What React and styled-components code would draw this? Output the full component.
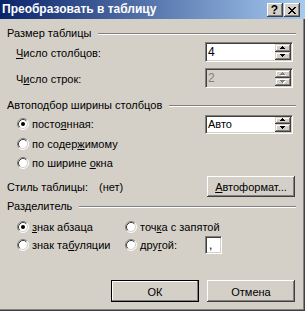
import React from 'react';
import styled, { createGlobalStyle, css } from 'styled-components';

const Global = createGlobalStyle`
  html, body { margin: 0; padding: 0; background: #d4d0c8; }
  body { font-family: "Liberation Sans", Arial, sans-serif; font-size: 11px; color: #000; }
`;

const Window = styled.div`
  width: 305px;
  height: 311px;
  display: flex;
  flex-direction: column;
  background: #d4d0c8;
  font-family: "Liberation Sans", Arial, sans-serif;
  font-size: 11px;
  color: #000;
`;

const TitleBar = styled.div`
  height: 19px;
  flex: none;
  display: flex;
  align-items: flex-start;
  padding-left: 2px;
  background: linear-gradient(to right, #0a246a, #a6caf0);
`;

const TitleText = styled.span`
  color: #fff;
  font-weight: bold;
  font-size: 12px;
  line-height: 19px;
  white-space: nowrap;
`;

const CaptionButtons = styled.div`
  margin-left: auto;
  margin-right: 5px;
  margin-top: 3px;
  display: flex;
  gap: 1px;
`;

const CaptionButton = styled.div`
  width: 16px;
  height: 14px;
  box-sizing: border-box;
  background: #d4d0c8;
  box-shadow: inset -1px -1px #404040, inset 1px 1px #fff, inset -2px -2px #808080, inset 2px 2px #d4d0c8;
  display: flex;
  align-items: center;
  justify-content: center;
  font-weight: bold;
  font-size: 12px;
  line-height: 14px;
  padding-right: 1px;
`;

const Body = styled.div`
  flex: 1;
  display: flex;
  flex-direction: column;
  padding: 0 8px 0 7px;
  border-right: 1px solid #404040;
  border-bottom: 1px solid #404040;
  box-shadow: inset -1px -1px #808080;
`;

const GroupHeader = styled.div`
  display: flex;
  align-items: center;
  height: 14px;
  margin-top: ${p => p.$mt}px;
  white-space: nowrap;
`;

const GroupLine = styled.div`
  flex: 1;
  margin-left: 7px;
  margin-top: 1px;
  border-top: 1px solid #808080;
  border-bottom: 1px solid #fff;
`;

const FieldRow = styled.div`
  display: flex;
  align-items: center;
  height: ${p => p.$h}px;
  margin-top: ${p => p.$mt}px;
  padding-left: ${p => p.$pl ?? 9}px;
  white-space: nowrap;
`;

const Label = styled.span`
  padding-top: 1px;
  min-width: ${p => p.$w || 0}px;
`;

const Key = styled.span`
  text-decoration: underline;
`;

const SpinBox = styled.div`
  width: 88px;
  height: ${p => p.$h}px;
  box-sizing: border-box;
  margin-left: auto;
  margin-right: 3px;
  display: flex;
  border: 1px solid;
  border-color: #808080 #fff #fff #808080;
  box-shadow: inset 1px 1px #404040, inset -1px -1px #d4d0c8;
  padding: 1px;
  background: ${p => (p.$disabled ? '#d4d0c8' : '#fff')};
`;

const SpinValue = styled.div`
  flex: 1;
  display: flex;
  align-items: center;
  padding-left: 1px;
  font-size: ${p => (p.$big ? 12 : 11)}px;
  color: ${p => (p.$disabled ? '#808080' : '#000')};
`;

const SpinButtons = styled.div`
  width: 16px;
  display: flex;
  flex-direction: column;
`;

const SpinButton = styled.div`
  flex: 1;
  display: flex;
  align-items: center;
  justify-content: center;
  background: #d4d0c8;
  box-shadow: inset -1px -1px #404040, inset 1px 1px #d4d0c8, inset -2px -2px #808080, inset 2px 2px #fff;
`;

const RadioRow = styled.div`
  display: grid;
  grid-template-columns: ${p => p.$cols || '1fr'};
  align-items: center;
  height: ${p => p.$h}px;
  margin-top: ${p => p.$mt || 0}px;
  padding-left: 10px;
  white-space: nowrap;
`;

const RadioItem = styled.div`
  display: flex;
  align-items: center;
  gap: 3px;
  grid-column: ${p => p.$span || 'auto'};
`;

const TextBox = styled.div`
  width: 17px;
  height: 18px;
  box-sizing: border-box;
  border: 1px solid;
  border-color: #808080 #fff #fff #808080;
  box-shadow: inset 1px 1px #404040, inset -1px -1px #d4d0c8;
  background: #fff;
  padding: 1px 0 0 3px;
  font-size: 12px;
  line-height: 14px;
`;

const PushButton = styled.div`
  width: 88px;
  height: ${p => p.$h}px;
  box-sizing: border-box;
  display: flex;
  align-items: center;
  justify-content: center;
  background: #d4d0c8;
  padding-top: 1px;
  margin-left: ${p => (p.$auto ? 'auto' : '0')};
  margin-right: ${p => p.$mr || 0}px;
  box-shadow: inset -1px -1px #404040, inset 1px 1px #fff, inset -2px -2px #808080, inset 2px 2px #d4d0c8;
  ${p => p.$default && css`
    box-shadow: inset 0 0 0 1px #000, inset -2px -2px #808080, inset 2px 2px #fff;
  `}
`;

const ButtonRow = styled.div`
  display: flex;
  justify-content: flex-end;
  gap: 8px;
  margin-top: 26px;
  margin-right: 1px;
`;

const Arrow = ({ up, disabled }) => {
  const d = up
    ? 'M2 0h1v1H2z M1 1h3v1H1z M0 2h5v1H0z'
    : 'M0 0h5v1H0z M1 1h3v1H1z M2 2h1v1H2z';
  return (
    <svg width="6" height="4" viewBox="0 0 6 4" shapeRendering="crispEdges">
      {disabled && <path d={d} fill="#fff" transform="translate(1,1)" />}
      <path d={d} fill={disabled ? '#808080' : '#000'} />
    </svg>
  );
};

const Spin = ({ value, disabled, h = 20 }) => (
  <SpinBox $h={h} $disabled={disabled}>
    <SpinValue $disabled={disabled} $big={!isNaN(+value)}>{value}</SpinValue>
    <SpinButtons>
      <SpinButton><Arrow up disabled={disabled} /></SpinButton>
      <SpinButton><Arrow disabled={disabled} /></SpinButton>
    </SpinButtons>
  </SpinBox>
);

const Radio = ({ checked }) => (
  <svg width="12" height="12" viewBox="0 0 12 12">
    <circle cx="6" cy="6" r="5" fill="#fff" />
    <path d="M2.11 9.89 A5.5 5.5 0 0 1 9.89 2.11" fill="none" stroke="#808080" strokeWidth="1" />
    <path d="M9.89 2.11 A5.5 5.5 0 0 1 2.11 9.89" fill="none" stroke="#fff" strokeWidth="1" />
    <path d="M2.82 9.18 A4.5 4.5 0 0 1 9.18 2.82" fill="none" stroke="#404040" strokeWidth="1" />
    <path d="M9.18 2.82 A4.5 4.5 0 0 1 2.82 9.18" fill="none" stroke="#d4d0c8" strokeWidth="1" />
    {checked && <circle cx="6" cy="6" r="2" fill="#000" />}
  </svg>
);

const CloseGlyph = () => (
  <svg width="8" height="7" viewBox="0 0 8 7" shapeRendering="crispEdges">
    <path
      d="M0 0h2v1H0z M6 0h2v1H6z M1 1h2v1H1z M5 1h2v1H5z M2 2h4v1H2z M3 3h2v1H3z M2 4h4v1H2z M1 5h2v1H1z M5 5h2v1H5z M0 6h2v1H0z M6 6h2v1H6z"
      fill="#000"
    />
  </svg>
);

export default function App() {
  return (
    <>
      <Global />
      <Window>
        <TitleBar>
          <TitleText>Преобразовать в таблицу</TitleText>
          <CaptionButtons>
            <CaptionButton>?</CaptionButton>
            <CaptionButton><CloseGlyph /></CaptionButton>
          </CaptionButtons>
        </TitleBar>
        <Body>
          <GroupHeader $mt={7}>
            <span>Размер таблицы</span>
            <GroupLine />
          </GroupHeader>
          <FieldRow $h={20} $mt={2}>
            <Label><Key>Ч</Key>исло столбцов:</Label>
            <Spin value="4" />
          </FieldRow>
          <FieldRow $h={20} $mt={6}>
            <Label>Ч<Key>и</Key>сло строк:</Label>
            <Spin value="2" disabled />
          </FieldRow>

          <GroupHeader $mt={10}>
            <span>Автоподбор ширины столбцов</span>
            <GroupLine />
          </GroupHeader>
          <FieldRow $h={20} $mt={2} $pl={10}>
            <RadioItem>
              <Radio checked />
              <span>посто<Key>я</Key>нная:</span>
            </RadioItem>
            <Spin value="Авто" h={19} />
          </FieldRow>
          <RadioRow $h={19}>
            <RadioItem>
              <Radio />
              <span>по содер<Key>ж</Key>имому</span>
            </RadioItem>
          </RadioRow>
          <RadioRow $h={19}>
            <RadioItem>
              <Radio />
              <span>по ширине <Key>о</Key>кна</span>
            </RadioItem>
          </RadioRow>
          <FieldRow $h={21} $mt={4} $pl={0}>
            <Label $w={92}>Стиль таблицы:</Label>
            <Label>(нет)</Label>
            <PushButton $h={21} $auto $mr={1}>
              <span><Key>А</Key>втоформат...</span>
            </PushButton>
          </FieldRow>

          <GroupHeader $mt={2}>
            <span>Разделитель</span>
            <GroupLine />
          </GroupHeader>
          <RadioRow $h={18} $mt={5} $cols="108px 80px 1fr">
            <RadioItem>
              <Radio checked />
              <span><Key>з</Key>нак абзаца</span>
            </RadioItem>
            <RadioItem $span="2 / 4">
              <Radio />
              <span>точ<Key>к</Key>а с запятой</span>
            </RadioItem>
          </RadioRow>
          <RadioRow $h={18} $cols="108px 80px 1fr">
            <RadioItem>
              <Radio />
              <span>знак та<Key>б</Key>уляции</span>
            </RadioItem>
            <RadioItem>
              <Radio />
              <span>дру<Key>г</Key>ой:</span>
            </RadioItem>
            <TextBox>,</TextBox>
          </RadioRow>

          <ButtonRow>
            <PushButton $h={22} $default>ОК</PushButton>
            <PushButton $h={22}>Отмена</PushButton>
          </ButtonRow>
        </Body>
      </Window>
    </>
  );
}
